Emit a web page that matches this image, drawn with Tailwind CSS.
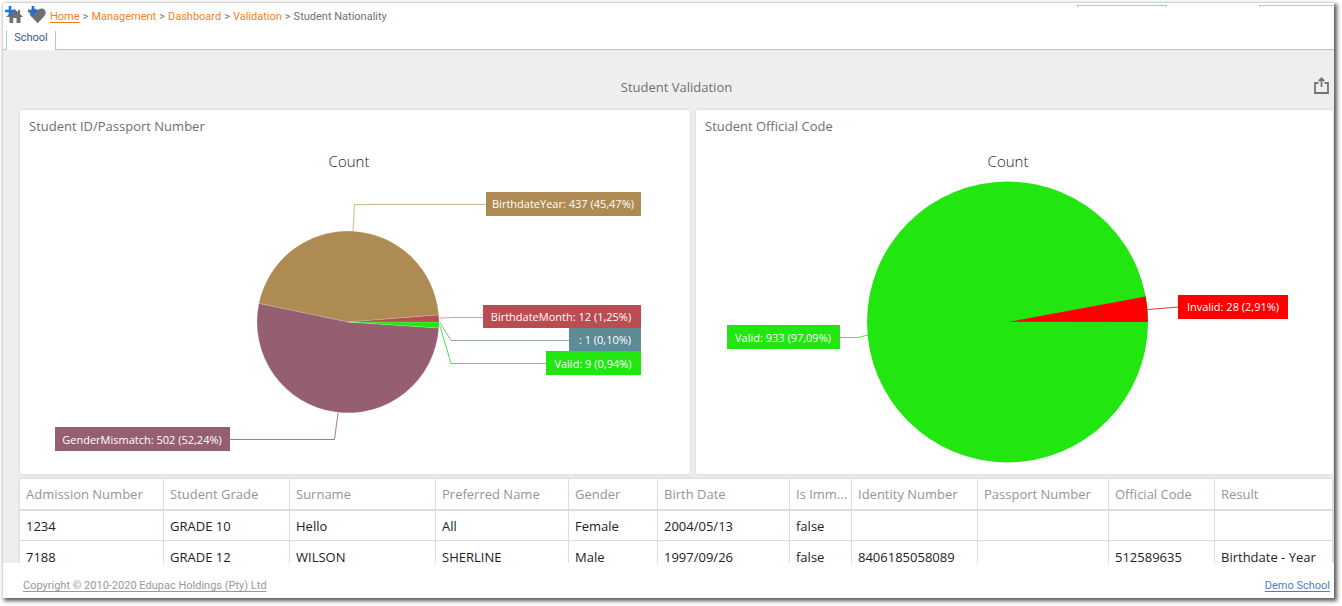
<!DOCTYPE html>
<html lang="en">
<head>
<meta charset="utf-8">
<title>Student Validation</title>
<script src="https://cdn.jsdelivr.net/npm/@tailwindcss/browser@4"></script>
</head>
<body class="bg-white font-['Open_Sans',sans-serif]">
<div class="h-screen pt-[3px] pl-[3px] pr-2 pb-2">
<div class="relative flex h-full flex-col overflow-hidden bg-white shadow-[2px_2px_4px_1px_rgba(0,0,0,0.65)]">
  <div class="absolute top-0.5 right-0 flex gap-[92px]" aria-hidden="true">
    <div class="h-0.5 w-[90px] border border-b-0 border-[#a9c7ec]"></div>
    <div class="h-0.5 w-[75px] border-t border-l border-[#a9c7ec]"></div>
  </div>

  <header class="flex h-7 shrink-0 items-center pl-0.5 font-[Roboto,sans-serif] text-[11px] text-[#6f7076]">
    <button type="button" aria-label="Add to home" class="mr-[5px] mb-1">
      <svg class="h-[18px] w-[18px]" viewBox="0 0 18 18"><path fill="#6f6f6f" d="M9.500 3L13 6.200V4h2v4l3 3h-2.500v6h-4v-5H8.200v5H4.500v-6H1z"/><path stroke="#1976d8" stroke-width="2.600" d="M5 0v10M0 5h10"/></svg>
    </button>
    <button type="button" aria-label="Add to favourites" class="mr-1 mb-1">
      <svg class="h-[18px] w-[18px]" viewBox="0 0 18 18"><path fill="#6f6f6f" d="M9.700 17.300L2.500 9.800C.5 7 2 2.500 5.700 2.500c1.900 0 3.200.9 4.100 2C10.600 3.400 11.900 2.500 13.500 2.500c4 0 5.300 4.300 3.100 7.300z"/><path stroke="#1976d8" stroke-width="2.600" d="M5 0v10M0 5h10"/></svg>
    </button>
    <nav aria-label="Breadcrumb" class="flex gap-[3px] whitespace-nowrap">
      <a href="#" class="text-[#f5821f] underline underline-offset-2">Home</a><span>&gt;</span>
      <a href="#" class="text-[#f5821f]">Management</a><span>&gt;</span>
      <a href="#" class="text-[#f5821f]">Dashboard</a><span>&gt;</span>
      <a href="#" class="text-[#f5821f]">Validation</a><span>&gt;</span>
      <span>Student Nationality</span>
    </nav>
  </header>

  <div class="flex h-[19px] shrink-0 font-[Roboto,sans-serif] text-[11px]">
    <div class="w-[3px] border-b border-[#a9c7ec]"></div>
    <button type="button" class="w-[50px] border-x border-[#a9c7ec] pb-1.5 leading-3 text-[#3a5a96]">School</button>
    <div class="flex-1 border-b border-[#a9c7ec]"></div>
  </div>

  <main class="flex min-h-0 flex-1 flex-col overflow-hidden bg-[#eeeeee] pr-px pl-[17px]">
    <div class="relative flex h-[60px] shrink-0 items-center justify-center pt-4">
      <h1 class="text-[13px] text-[#6f6f6f]">Student Validation</h1>
      <button type="button" aria-label="Export" class="absolute right-1 bottom-4">
        <svg class="h-[17px] w-[15px]" viewBox="0 0 15 17" fill="none" stroke="#757575" stroke-width="1.800"><path d="M4.500 6H1v10h13V6h-3.500M7.500 10V1.500M4.800 4l2.700-2.700L10.200 4"/></svg>
      </button>
    </div>

    <div class="grid shrink-0 grid-cols-[670fr_637fr] gap-1.5">
      <section class="rounded-xs bg-white shadow-[0_0_3px_rgba(0,0,0,0.15)]">
        <h2 class="h-8 pl-[9px] text-[13px] leading-8 text-[#6f6f6f]">Student ID/Passport Number</h2>
        <svg class="block w-full" viewBox="20 142 670 332" role="img" aria-label="Student ID/Passport Number count">
          <text x="349" y="167" text-anchor="middle" font-size="15" class="fill-[#222] font-light">Count</text>
          <g stroke="#fff" stroke-opacity=".3" stroke-width=".5">
            <path fill="#ae8b53" d="M348 322L438.700 314.900A91 91 0 0 0 258.900 303.400z"/>
            <path fill="#955f71" d="M348 322L258.900 303.400A91 91 0 1 0 438.800 328z"/>
            <path fill="#22e610" d="M348 322L438.800 328A91 91 0 0 0 439 322z"/>
            <path fill="#ba4d51" d="M348 322H439A91 91 0 0 0 438.700 314.900z"/>
          </g>
          <g fill="none" stroke-width="1">
            <path stroke="#ceb797" d="M353 231L354.500 204.500H486"/>
            <path stroke="#d89a9c" d="M440 318L455 317.500H484"/>
            <path stroke="#8fabb1" d="M440 322.500L451 340.500H569"/>
            <path stroke="#4bea3c" d="M440 326L451 363.500H546"/>
            <path stroke="#a8798a" d="M338 413L334.500 439.500H230"/>
          </g>
          <path fill="#ae8b53" d="M486 192h155v24H486z"/>
          <path fill="#ba4d51" d="M483 305h158v23H483z"/>
          <path fill="#5f8b95" d="M569 328h72v23h-72z"/>
          <path fill="#22e610" d="M546 351h95v24h-95z"/>
          <path fill="#955f71" d="M55 427h175v24H55z"/>
          <g fill="#fff" font-size="11" text-anchor="middle">
            <text x="563" y="208">BirthdateYear: 437 (45,47%)</text>
            <text x="561" y="321">BirthdateMonth: 12 (1,25%)</text>
            <text x="605" y="344">: 1 (0,10%)</text>
            <text x="593" y="368">Valid: 9 (0,94%)</text>
            <text x="142" y="444">GenderMismatch: 502 (52,24%)</text>
          </g>
        </svg>
      </section>
      <section class="rounded-xs bg-white shadow-[0_0_3px_rgba(0,0,0,0.15)]">
        <h2 class="h-8 pl-[9px] text-[13px] leading-8 text-[#6f6f6f]">Student Official Code</h2>
        <svg class="block w-full" viewBox="696 142 637 332" role="img" aria-label="Student Official Code count">
          <text x="1008" y="167" text-anchor="middle" font-size="15" class="fill-[#222] font-light">Count</text>
          <circle cx="1007.500" cy="322" r="140.500" fill="#22e610"/>
          <path fill="#ff0000" d="M1009 321.800L1145.700 296.400A140.500 140.500 0 0 1 1148 322z"/>
          <path fill="none" stroke="#ee3a3a" d="M1148 309.500L1179 307"/>
          <path fill="none" stroke="#4bea3c" d="M840 337.500H858L868 335"/>
          <path fill="#ff0000" d="M1178 295h110v24h-110z"/>
          <path fill="#22e610" d="M727 325h113v24H727z"/>
          <g fill="#fff" font-size="11" text-anchor="middle">
            <text x="1233" y="311">Invalid: 28 (2,91%)</text>
            <text x="783" y="342">Valid: 933 (97,09%)</text>
          </g>
        </svg>
      </section>
    </div>

    <table class="mt-[5px] w-full shrink-0 table-fixed border-separate border-spacing-0 bg-white text-left text-[13px] whitespace-nowrap text-[#222] shadow-[0_0_3px_rgba(0,0,0,0.15)] [&_td]:h-[30px] [&_td]:border-r [&_td]:border-b [&_td]:border-[#dddddd] [&_td]:pl-1.5 [&_td]:leading-4 [&_th]:h-8 [&_th]:border-r [&_th]:border-b-2 [&_th]:border-[#dddddd] [&_th]:pl-1.5 [&_th]:leading-5 [&_th]:font-normal [&_th]:text-[#959595] [&_tr:last-child_td]:h-8">
      <colgroup>
        <col class="w-[144px]"><col class="w-[126px]"><col class="w-[146px]"><col class="w-[133px]"><col class="w-[89px]"><col class="w-[132px]"><col class="w-[62px]"><col class="w-[126px]"><col class="w-[131px]"><col class="w-[106px]"><col>
      </colgroup>
      <thead>
        <tr><th>Admission Number</th><th>Student Grade</th><th>Surname</th><th>Preferred Name</th><th>Gender</th><th>Birth Date</th><th>Is Imm...</th><th>Identity Number</th><th>Passport Number</th><th>Official Code</th><th>Result</th></tr>
      </thead>
      <tbody>
        <tr><td>1234</td><td>GRADE 10</td><td>Hello</td><td>All</td><td>Female</td><td>2004/05/13</td><td>false</td><td></td><td></td><td></td><td></td></tr>
        <tr><td>7188</td><td>GRADE 12</td><td>WILSON</td><td>SHERLINE</td><td>Male</td><td>1997/09/26</td><td>false</td><td>8406185058089</td><td></td><td>512589635</td><td>Birthdate - Year</td></tr>
      </tbody>
    </table>
  </main>

  <footer class="flex h-[35px] shrink-0 items-center justify-between pt-3 pr-1 pl-5 font-[Roboto,sans-serif] text-[11px]">
    <a href="#" class="text-[#999999] underline underline-offset-2">Copyright © 2010-2020 Edupac Holdings (Pty) Ltd</a>
    <a href="#" class="text-[#4a7fc8] underline underline-offset-2">Demo School</a>
  </footer>
</div>
</div>
</body>
</html>
